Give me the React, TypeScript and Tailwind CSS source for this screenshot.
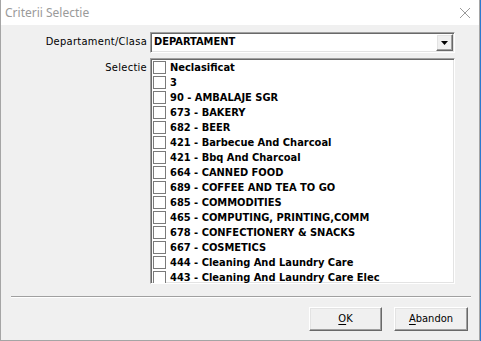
const items = [
  "Neclasificat",
  "3",
  "90 - AMBALAJE SGR",
  "673 - BAKERY",
  "682 - BEER",
  "421 - Barbecue And Charcoal",
  "421 - Bbq And Charcoal",
  "664 - CANNED FOOD",
  "689 - COFFEE AND TEA TO GO",
  "685 - COMMODITIES",
  "465 - COMPUTING, PRINTING,COMM",
  "678 - CONFECTIONERY & SNACKS",
  "667 - COSMETICS",
  "444 - Cleaning And Laundry Care",
  "443 - Cleaning And Laundry Care Elec",
];

const sunken =
  "border border-t-[#a0a0a0] border-l-[#a0a0a0] border-r-white border-b-white shadow-[inset_1px_1px_0_#696969,inset_-1px_-1px_0_#e3e3e3]";
const raised =
  "border border-t-white border-l-white border-r-[#696969] border-b-[#696969] shadow-[inset_-1px_-1px_0_#a0a0a0,inset_1px_1px_0_#e3e3e3]";

function Button({ mn, rest, w }: { mn: string; rest: string; w: string }) {
  return (
    <button className={`${w} h-[24px] bg-[#f0f0f0] ${raised} text-[11px] text-black flex items-center justify-center`}>
      <span>
        <span className="underline underline-offset-2">{mn}</span>
        {rest}
      </span>
    </button>
  );
}

export default function App() {
  return (
    <div className="flex w-[481px] h-[341px] overflow-hidden font-['DejaVu_Sans_Condensed','Liberation_Sans',sans-serif]">
      <div className="w-[480px] h-[341px] flex flex-col border-l border-r border-b border-[#a5a5a5] bg-[#f0f0f0]">
        {/* title bar */}
        <div className="h-[25px] bg-white flex items-center justify-between pl-[4px] pr-[6px] shrink-0">
          <span className="text-[12px] text-[#9a9a9a] font-['Noto_Sans',sans-serif]">Criterii Selectie</span>
          <svg width="12" height="12" viewBox="0 0 12 12" className="mr-[2px]">
            <path d="M1 1 L11 11 M11 1 L1 11" stroke="#9a9a9a" strokeWidth="1" fill="none" />
          </svg>
        </div>

        {/* combo row */}
        <div className="flex items-center mt-[7px]">
          <div className="w-[146px] text-right text-[11px] tracking-[0.3px] text-black">Departament/Clasa</div>
          <div className={`ml-[3px] w-[305px] h-[21px] bg-white ${sunken} flex items-center pl-[3px] pr-[1px]`}>
            <span className="flex-1 text-[11px] font-bold text-black">DEPARTAMENT</span>
            <div className={`w-[17px] h-[17px] bg-[#f0f0f0] ${raised} flex items-center justify-center`}>
              <svg width="7" height="4" viewBox="0 0 7 4">
                <path d="M0 0 H7 L3.5 4 Z" fill="#000" />
              </svg>
            </div>
          </div>
        </div>

        {/* list row */}
        <div className="flex items-start mt-[5px]">
          <div className="w-[146px] text-right text-[11px] tracking-[0.3px] text-black mt-[2px] leading-[15px]">Selectie</div>
          <div className={`ml-[3px] w-[305px] h-[226px] bg-white ${sunken} overflow-hidden pt-[1px] pl-[1px]`}>
            {items.map((it) => (
              <div key={it} className="h-[15px] flex items-center">
                <span className="w-[13px] h-[13px] border border-[#7a7a7a] bg-white shrink-0 ml-[1px]" />
                <span className="ml-[4px] text-[11px] font-bold text-black whitespace-nowrap leading-[15px]">{it}</span>
              </div>
            ))}
          </div>
        </div>

        {/* separator */}
        <div className="mt-[12px] ml-[10px] mr-[8px] h-[2px] border-t border-[#a0a0a0] border-b border-b-white" />

        {/* buttons */}
        <div className="flex justify-end gap-[12px] mt-[9px] mr-[11px]">
          <Button mn="O" rest="K" w="w-[73px]" />
          <Button mn="A" rest="bandon" w="w-[74px]" />
        </div>
      </div>
      <div className="w-[1px] h-[341px] bg-[#2b79d0]" />
    </div>
  );
}
